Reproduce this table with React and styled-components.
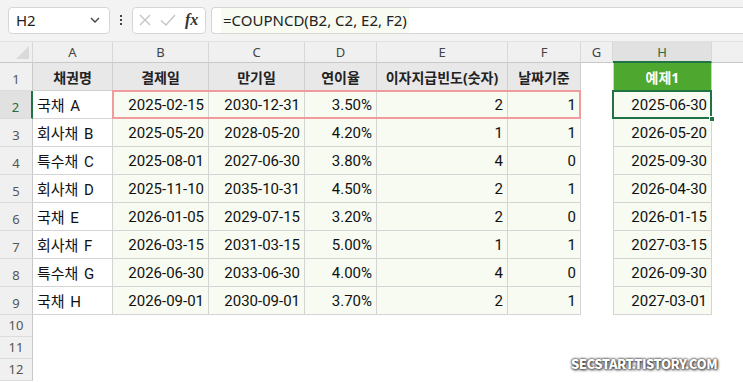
import styled, { createGlobalStyle, css } from "styled-components"

const GlobalStyle = createGlobalStyle`
  html, body { margin: 0; padding: 0; background: #fff; }
  body { width: 743px; height: 382px; overflow: hidden; font-family: "Noto Sans", "Noto Sans CJK KR", sans-serif; }
  * { box-sizing: border-box; }
`

const headers = ["채권명", "결제일", "만기일", "연이율", "이자지급빈도(숫자)", "날짜기준"]

const rows = [
  ["국채 A", "2025-02-15", "2030-12-31", "3.50%", "2", "1", "2025-06-30"],
  ["회사채 B", "2025-05-20", "2028-05-20", "4.20%", "1", "1", "2026-05-20"],
  ["특수채 C", "2025-08-01", "2027-06-30", "3.80%", "4", "0", "2025-09-30"],
  ["회사채 D", "2025-11-10", "2035-10-31", "4.50%", "2", "1", "2026-04-30"],
  ["국채 E", "2026-01-05", "2029-07-15", "3.20%", "2", "0", "2026-01-15"],
  ["회사채 F", "2026-03-15", "2031-03-15", "5.00%", "1", "1", "2027-03-15"],
  ["특수채 G", "2026-06-30", "2033-06-30", "4.00%", "4", "0", "2026-09-30"],
  ["국채 H", "2026-09-01", "2030-09-01", "3.70%", "2", "1", "2027-03-01"],
]

const columns = ["A", "B", "C", "D", "E", "F", "G", "H"]

// 셀 위치는 그리드 행/열로 직접 지정 (선택 박스가 겹쳐도 흐트러지지 않게)
const place = css`
  grid-row: ${(p) => p.$r};
  grid-column: ${(p) => p.$c};
`

export default function App() {
  return (
    <>
      <GlobalStyle />
      <Page>
        <FormulaBar>
          <NameBox>
            <span>H2</span>
            <svg width="12" height="8" viewBox="0 0 12 8">
              <path d="M2 2 L6 6 L10 2" fill="none" stroke="#444" strokeWidth="1.4" />
            </svg>
          </NameBox>
          <Dots>
            <i /><i /><i />
          </Dots>
          <FxBox>
            <svg width="16" height="16" viewBox="0 0 16 16">
              <path d="M3 3 L13 13 M13 3 L3 13" stroke="#c4c4c4" strokeWidth="1.3" />
            </svg>
            <svg width="18" height="16" viewBox="0 0 18 16">
              <path d="M2 8.5 L7 13 L16 3" fill="none" stroke="#c4c4c4" strokeWidth="1.3" />
            </svg>
            <FxText>fx</FxText>
          </FxBox>
          <FormulaInput>
            <FormulaText>=COUPNCD(B2, C2, E2, F2)</FormulaText>
          </FormulaInput>
        </FormulaBar>

        <Sheet>
          <Corner $r={1} $c={1}>
            <CornerTriangle />
          </Corner>
          {columns.map((c, i) => (
            <ColHead key={c} $r={1} $c={i + 2} $active={c === "H"}>{c}</ColHead>
          ))}
          <ColHead $r={1} $c={10} $blank />

          <RowHead $r={2} $c={1}>1</RowHead>
          {headers.map((h, i) => (
            <HeadCell key={h} $r={2} $c={i + 2}>{h}</HeadCell>
          ))}
          <GreenHead $r={2} $c={9}>예제1</GreenHead>

          {rows.map((r, i) => (
            <Row key={i} n={i + 2} data={r} />
          ))}

          {[10, 11, 12].map((n) => (
            <RowHead key={n} $r={n + 1} $c={1}>{n}</RowHead>
          ))}

          <PinkBox $r={3} $c="3 / 8" />
          <ActiveBox $r={3} $c={9}>
            <FillHandle />
          </ActiveBox>
        </Sheet>
        <Watermark>SECSTART.TISTORY.COM</Watermark>
      </Page>
    </>
  )
}

const Row = ({ n, data }) => (
  <>
    <RowHead $r={n + 1} $c={1} $active={n === 2}>{n}</RowHead>
    <Cell $r={n + 1} $c={2}>{data[0]}</Cell>
    {data.slice(1, 6).map((v, j) => (
      <Cell key={j} $r={n + 1} $c={j + 3} $num $tint>{v}</Cell>
    ))}
    <Cell $r={n + 1} $c={9} $num $tint $edge>{data[6]}</Cell>
  </>
)

const Page = styled.div`
  position: relative;
  width: 743px;
  height: 382px;
  background: #fff;
`

const FormulaBar = styled.div`
  height: 42px;
  background: #f3f3f3;
  display: flex;
  align-items: center;
  padding: 0 0 1px 8px;
  border-bottom: 1px solid #e0e0e0;
`

const NameBox = styled.div`
  width: 102px;
  height: 27px;
  background: #fff;
  border: 1px solid #d6d6d6;
  border-radius: 4px;
  display: flex;
  align-items: center;
  justify-content: space-between;
  padding: 0 8px 0 7px;
  font-size: 15px;
  color: #222;
`

const Dots = styled.div`
  width: 22px;
  display: flex;
  flex-direction: column;
  align-items: center;
  gap: 2px;
  i {
    width: 2px;
    height: 2px;
    background: #444;
    display: block;
  }
`

const FxBox = styled.div`
  width: 74px;
  height: 27px;
  background: #fff;
  border: 1px solid #d6d6d6;
  border-radius: 4px;
  display: flex;
  align-items: center;
  padding: 0 0 0 4px;
  gap: 6px;
`

const FxText = styled.span`
  font-family: "Liberation Serif", serif;
  font-style: italic;
  font-size: 16px;
  font-weight: bold;
  color: #333;
  margin-left: 2px;
`

const FormulaInput = styled.div`
  flex: 1;
  height: 27px;
  margin-left: 5px;
  background: #fff;
  border: 1px solid #d6d6d6;
  border-right: none;
  border-radius: 4px 0 0 4px;
  display: flex;
  align-items: center;
  padding-left: 9px;
`

const FormulaText = styled.span`
  background: #f7fbf1;
  font-size: 15px;
  color: #222;
  line-height: 25px;
  padding: 0 2px;
`

const Sheet = styled.div`
  display: grid;
  grid-template-columns: 33px 80px 96px 96px 72px 131px 73px 32px 99px 1fr;
  grid-template-rows: 21px repeat(9, 28px) repeat(3, 22px);
  font-family: Roboto, "Noto Sans CJK KR", sans-serif;
  font-size: 15px;
  color: #111;
`

const Corner = styled.div`
  ${place}
  background: #f0f0f0;
  border-right: 1px solid #d8d8d8;
  border-bottom: 1px solid #c8c8c8;
  display: flex;
  align-items: flex-end;
  justify-content: flex-end;
  padding: 3px;
`

const CornerTriangle = styled.div`
  width: 0;
  height: 0;
  border-left: 13px solid transparent;
  border-bottom: 13px solid #dadada;
`

const ColHead = styled.div`
  ${place}
  background: ${(p) => (p.$active ? "#e1e1e1" : "#f0f0f0")};
  border-right: ${(p) => (p.$blank ? "none" : "1px solid #d8d8d8")};
  border-bottom: ${(p) => (p.$active ? "2px solid #217346" : "1px solid #c8c8c8")};
  color: ${(p) => (p.$active ? "#1e6e3f" : "#444")};
  font-family: "Noto Sans", sans-serif;
  font-size: 13px;
  display: flex;
  align-items: center;
  justify-content: center;
`

const RowHead = styled.div`
  ${place}
  background: ${(p) => (p.$active ? "#e1e1e1" : "#f0f0f0")};
  border-right: ${(p) => (p.$active ? "2px solid #217346" : "1px solid #c8c8c8")};
  border-bottom: 1px solid #dcdcdc;
  color: ${(p) => (p.$active ? "#1e6e3f" : "#555")};
  font-family: "Noto Sans", sans-serif;
  font-size: 13px;
  display: flex;
  align-items: flex-end;
  justify-content: center;
  padding-bottom: 2px;
`

const HeadCell = styled.div`
  ${place}
  background: #e8e8e8;
  border-right: 1px solid #cfcfcf;
  border-bottom: 1px solid #cfcfcf;
  font-family: "Noto Sans", "Noto Sans CJK KR", sans-serif;
  font-weight: bold;
  font-size: 14px;
  color: #222;
  display: flex;
  align-items: center;
  justify-content: center;
`

const GreenHead = styled(HeadCell)`
  background: #4ea72e;
  border-left: 1px solid #cfcfcf;
  color: #fff;
`

const Cell = styled.div`
  ${place}
  background: ${(p) => (p.$tint ? "#f7fbf1" : "#fff")};
  border-left: ${(p) => (p.$edge ? "1px solid #d4d4d4" : "none")};
  border-right: 1px solid #d4d4d4;
  border-bottom: 1px solid #d4d4d4;
  display: flex;
  align-items: center;
  justify-content: ${(p) => (p.$num ? "flex-end" : "flex-start")};
  padding: 0 4px;
  white-space: nowrap;
  word-spacing: 2px;
`

const PinkBox = styled.div`
  ${place}
  margin: -1px 0 0 -1px;
  border: 2px solid #f19c9c;
  pointer-events: none;
`

const ActiveBox = styled.div`
  ${place}
  margin: -1px 0 0 -1px;
  border: 2px solid #217346;
  position: relative;
  pointer-events: none;
`

const FillHandle = styled.div`
  position: absolute;
  right: -5px;
  bottom: -5px;
  width: 6px;
  height: 6px;
  background: #217346;
  border: 1px solid #fff;
`

const Watermark = styled.div`
  position: absolute;
  left: 571px;
  top: 354px;
  font-family: "Noto Sans CJK KR", sans-serif;
  font-weight: 900;
  font-size: 13px;
  letter-spacing: -0.5px;
  color: #fff;
  text-shadow: 0 0 2px #333, 0 0 3px #555, 1px 1px 3px #444;
`
